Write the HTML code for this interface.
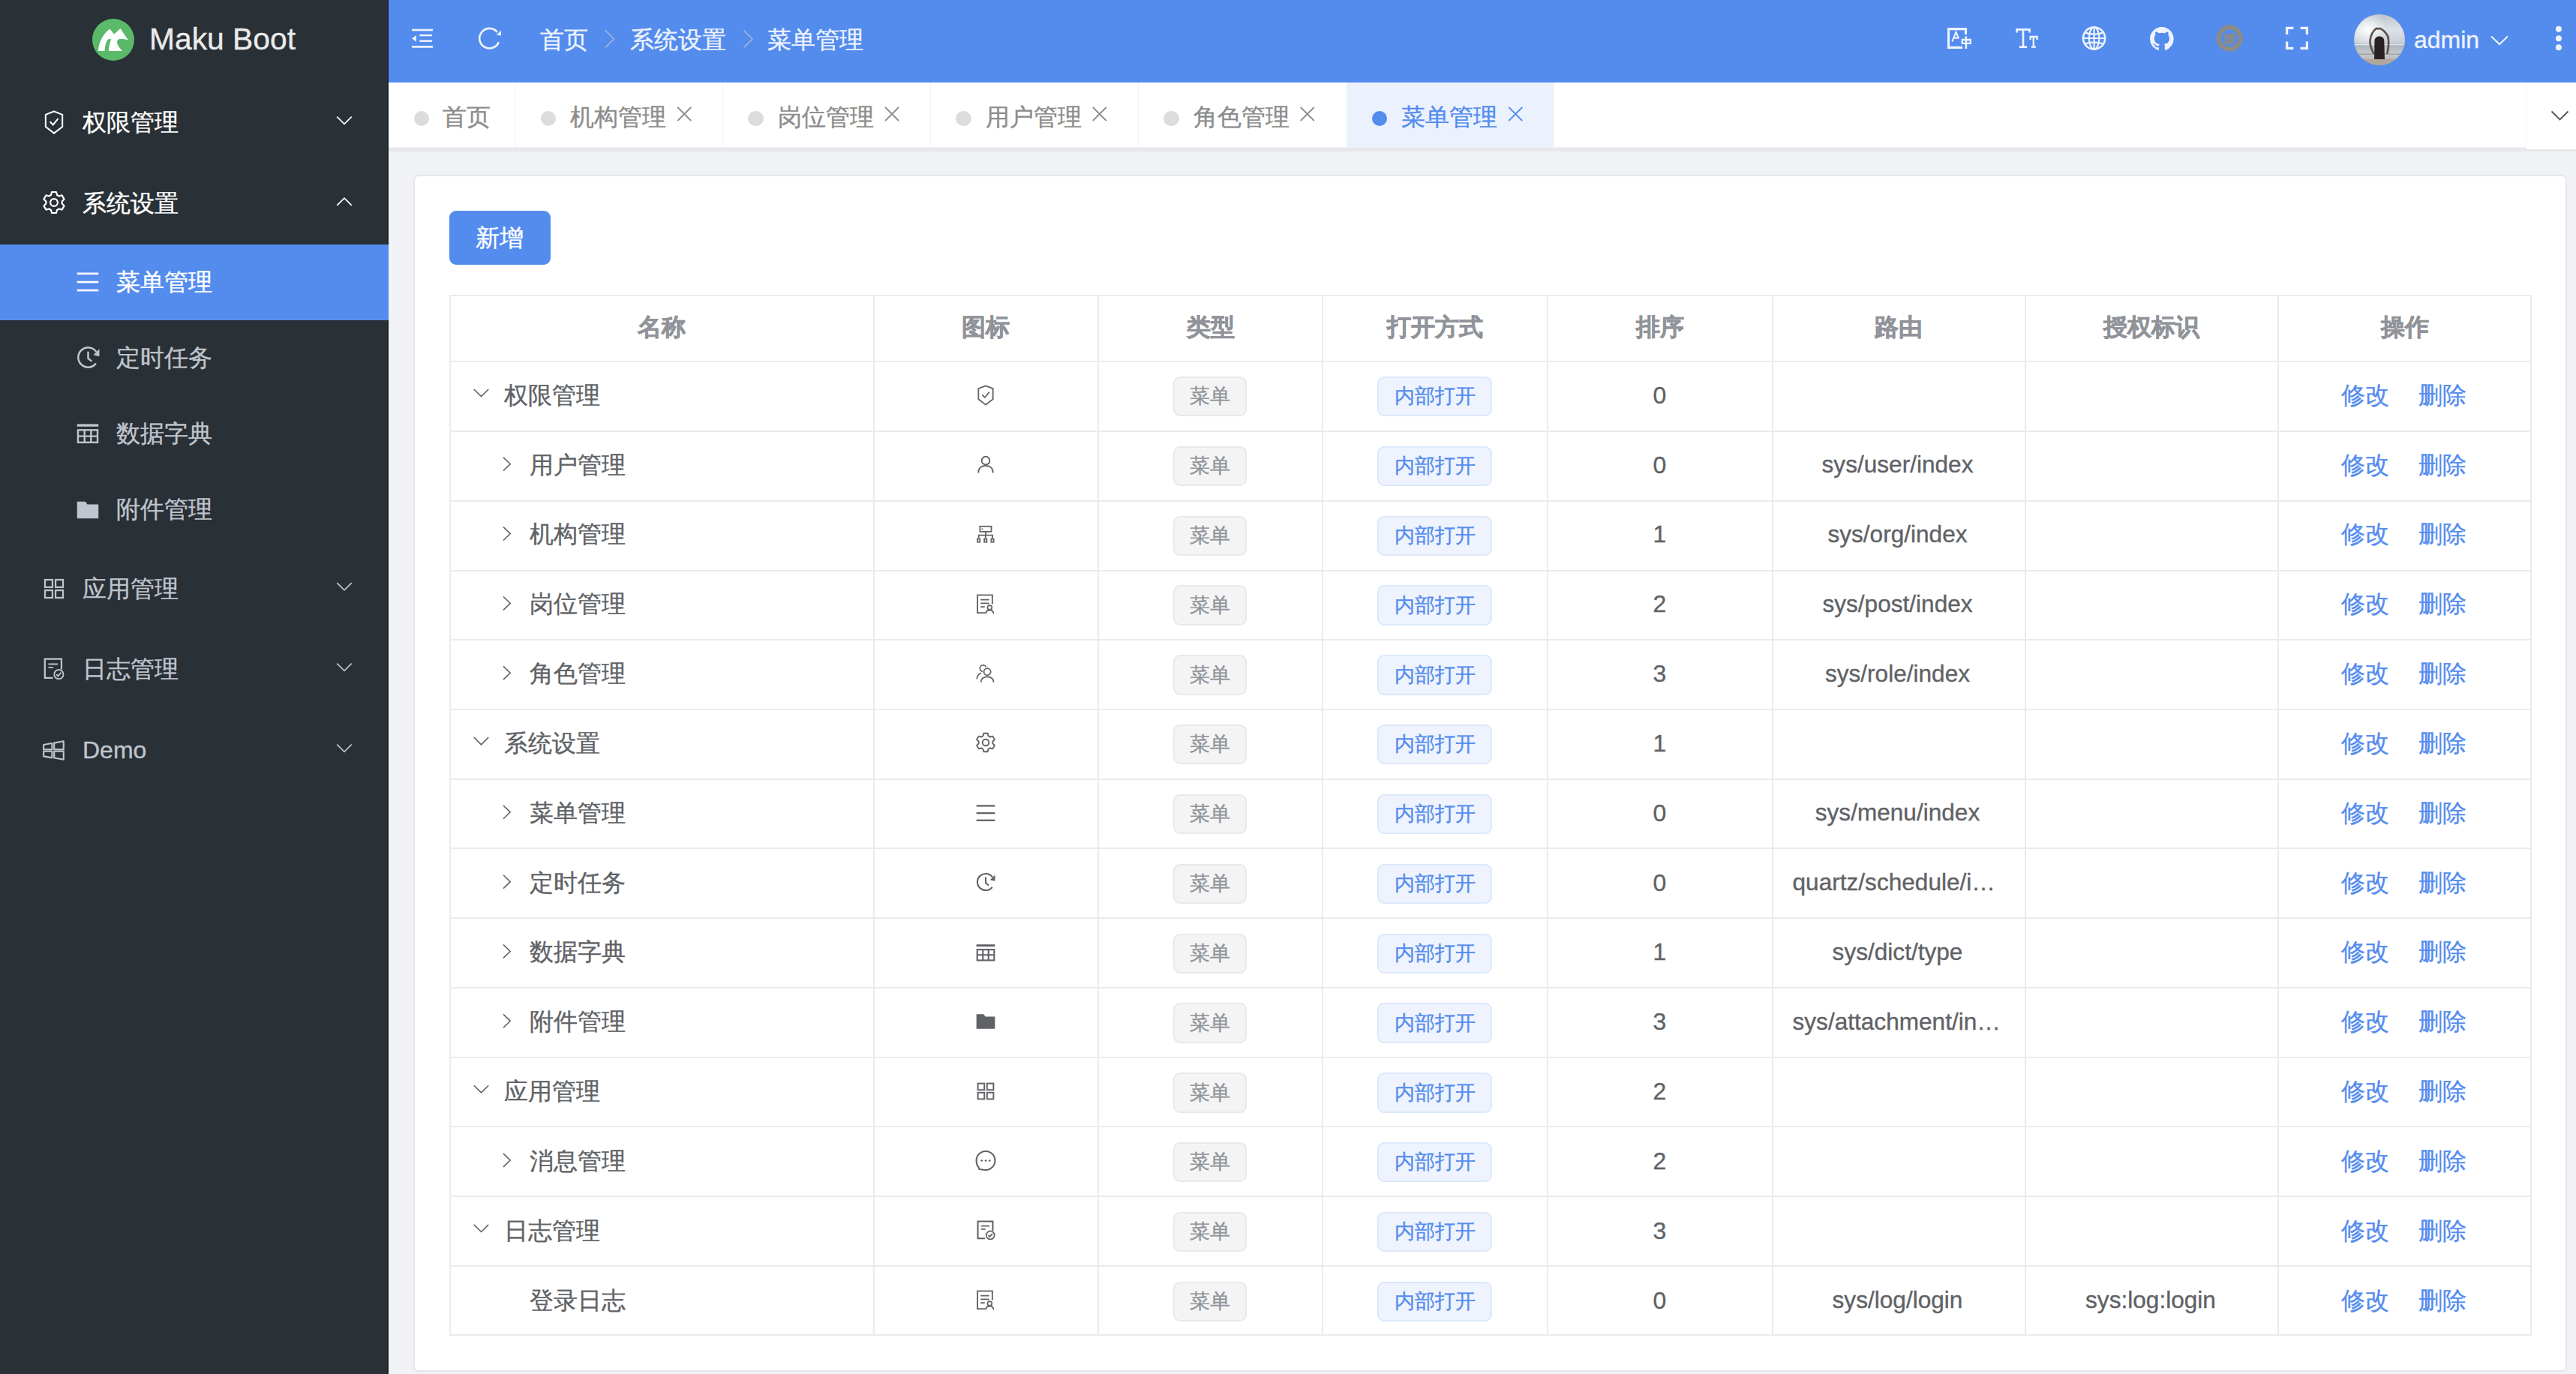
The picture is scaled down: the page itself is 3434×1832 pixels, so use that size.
<!DOCTYPE html><html><head><meta charset="utf-8"><style>
*{box-sizing:border-box;margin:0;padding:0}
html,body{width:3434px;height:1832px;overflow:hidden}
body{position:relative;background:#f0f2f5;font-family:"Liberation Sans",sans-serif;}
.a{position:absolute}
svg{position:absolute;overflow:visible}
.t{position:absolute;white-space:nowrap;-webkit-text-stroke:0.35px currentColor}
</style></head><body>
<div class="a" style="left:0;top:0;width:518px;height:1832px;background:#293036"></div>
<div class="a" style="left:516px;top:0;width:2px;height:1832px;background:rgba(0,0,0,0.22)"></div>
<svg style="left:123px;top:25px" width="56" height="56" viewBox="0 0 56 56">
<circle cx="28" cy="28" r="28" fill="#5bb96a"/>
<path d="M7.9 43 C9 30 15 20 23.3 13.6 L29.1 20.4 L37.5 13.1 L48 28.8 C44 27 38 26 35.4 27.3 C32 29 31.5 34 40.1 43 L21.8 43 C22.5 36 23.5 31 25.4 27.3 L21.2 27.3 C18 31 17 37 16.5 43 Z" fill="#fff"/>
</svg>
<div class="t" style="left:199px;top:12.20px;height:81.6px;line-height:81.6px;font-size:40.8px;color:#ebebeb;font-weight:normal;">Maku Boot</div>
<div class="a" style="left:0;top:326px;width:518px;height:101px;background:#548cee"></div>
<svg style="left:57.00px;top:148.00px" width="30" height="30" viewBox="0 0 32 32" ><path d="M16 0.5 L27.9 5.2 V22.4 L16 31.6 L4.1 22.4 V5.2 Z" fill="none" stroke="#ffffff" stroke-width="2.2" stroke-linejoin="miter"/><path d="M10.3 15.2 L14.6 19.7 L21.9 10.8" fill="none" stroke="#ffffff" stroke-width="2.2"/></svg>
<div class="t" style="left:110px;top:131.00px;height:64px;line-height:64px;font-size:32px;color:#ffffff;font-weight:normal;">权限管理</div>
<svg style="left:0;top:0" width="3434" height="1832"><path d="M449.25 155.62 L459.00 165.38 L468.75 155.62" fill="none" stroke="#ffffff" stroke-width="1.7"/></svg>
<svg style="left:56.00px;top:254.30px" width="32" height="32" viewBox="0 0 32 32" ><path d="M20.05 5.99 L18.97 2.01 L13.03 2.01 L11.95 5.99 L9.35 7.49 L5.37 6.43 L2.40 11.58 L5.31 14.50 L5.31 17.50 L2.40 20.42 L5.37 25.57 L9.35 24.51 L11.95 26.01 L13.03 29.99 L18.97 29.99 L20.05 26.01 L22.65 24.51 L26.63 25.57 L29.60 20.42 L26.69 17.50 L26.69 14.50 L29.60 11.58 L26.63 6.43 L22.65 7.49 Z" fill="none" stroke="#ffffff" stroke-width="2.2" stroke-linejoin="round"/><circle cx="16" cy="16" r="4.9" fill="none" stroke="#ffffff" stroke-width="2.2"/></svg>
<div class="t" style="left:110px;top:239.00px;height:64px;line-height:64px;font-size:32px;color:#ffffff;font-weight:normal;">系统设置</div>
<svg style="left:0;top:0" width="3434" height="1832"><path d="M449.25 273.88 L459.00 264.12 L468.75 273.88" fill="none" stroke="#ffffff" stroke-width="1.7"/></svg>
<svg style="left:57.00px;top:769.50px" width="30" height="30" viewBox="0 0 32 32" ><rect x="3.2" y="3.2" width="10.6" height="10.6" fill="none" stroke="#c0c4cc" stroke-width="2.4"/><rect x="3.2" y="18.2" width="10.6" height="10.6" fill="none" stroke="#c0c4cc" stroke-width="2.4"/><rect x="18.2" y="3.2" width="10.6" height="10.6" fill="none" stroke="#c0c4cc" stroke-width="2.4"/><rect x="18.2" y="18.2" width="10.6" height="10.6" fill="none" stroke="#c0c4cc" stroke-width="2.4"/></svg>
<div class="t" style="left:110px;top:752.50px;height:64px;line-height:64px;font-size:32px;color:#c0c4cc;font-weight:normal;">应用管理</div>
<svg style="left:0;top:0" width="3434" height="1832"><path d="M449.25 777.12 L459.00 786.88 L468.75 777.12" fill="none" stroke="#c0c4cc" stroke-width="1.7"/></svg>
<svg style="left:57.00px;top:877.00px" width="30" height="30" viewBox="0 0 32 32" ><path d="M14.5 28.7 H3 V1.8 H26.6 V16.5" fill="none" stroke="#c0c4cc" stroke-width="2.4"/><path d="M8 9 H21.5 M8 14 H15" stroke="#c0c4cc" stroke-width="2.1"/><circle cx="22.8" cy="23.6" r="6.5" fill="none" stroke="#c0c4cc" stroke-width="2.1"/><path d="M19.5 23.6 L21.7 26.2 L26 21.2" fill="none" stroke="#c0c4cc" stroke-width="2.1"/></svg>
<div class="t" style="left:110px;top:860.00px;height:64px;line-height:64px;font-size:32px;color:#c0c4cc;font-weight:normal;">日志管理</div>
<svg style="left:0;top:0" width="3434" height="1832"><path d="M449.25 884.62 L459.00 894.38 L468.75 884.62" fill="none" stroke="#c0c4cc" stroke-width="1.7"/></svg>
<svg style="left:57.00px;top:985.00px" width="30" height="30" viewBox="0 0 32 32" ><path d="M1.2 8.6 L13.2 6.4 V15.4 H1.2 Z" fill="none" stroke="#c0c4cc" stroke-width="2.3" stroke-linejoin="round"/><path d="M16.2 6 L29.6 3.5 V15.4 H16.2 Z" fill="none" stroke="#c0c4cc" stroke-width="2.3" stroke-linejoin="round"/><path d="M1.2 17.9 H13.2 V27 L1.2 25 Z" fill="none" stroke="#c0c4cc" stroke-width="2.3" stroke-linejoin="round"/><path d="M16.2 17.9 H29.6 V29.6 L16.2 27.2 Z" fill="none" stroke="#c0c4cc" stroke-width="2.3" stroke-linejoin="round"/></svg>
<div class="t" style="left:110px;top:968.00px;height:64px;line-height:64px;font-size:32px;color:#c0c4cc;font-weight:normal;">Demo</div>
<svg style="left:0;top:0" width="3434" height="1832"><path d="M449.25 992.62 L459.00 1002.38 L468.75 992.62" fill="none" stroke="#c0c4cc" stroke-width="1.7"/></svg>
<svg style="left:102.00px;top:361.80px" width="30" height="30" viewBox="0 0 32 32" ><rect x="0.8" y="1.6" width="30.4" height="2.8" fill="#ffffff"/><rect x="0.8" y="13.6" width="30.4" height="2.8" fill="#ffffff"/><rect x="0.8" y="25.4" width="30.4" height="2.8" fill="#ffffff"/></svg>
<div class="t" style="left:155px;top:343.50px;height:64px;line-height:64px;font-size:32px;color:#ffffff;font-weight:normal;">菜单管理</div>
<svg style="left:101.50px;top:461.00px" width="31" height="31" viewBox="0 0 32 32" ><path d="M27.14 8.20 A13.6 13.6 0 1 0 26.72 24.37" fill="none" stroke="#c0c4cc" stroke-width="2.6"/><path d="M31.4 4.4 L31.4 14.6 L23.1 12.6 Z" fill="#c0c4cc"/><path d="M16 8 V17.5 L21 21.5" fill="none" stroke="#c0c4cc" stroke-width="2.6"/></svg>
<div class="t" style="left:155px;top:444.50px;height:64px;line-height:64px;font-size:32px;color:#c0c4cc;font-weight:normal;">定时任务</div>
<svg style="left:102.00px;top:563.80px" width="30" height="30" viewBox="0 0 32 32" ><rect x="0.8" y="1.5" width="30.4" height="3.6" fill="#c0c4cc"/><rect x="2.1" y="10" width="27.8" height="17.6" fill="none" stroke="#c0c4cc" stroke-width="2.6"/><path d="M2.1 18.8 H29.9 M11.4 10 V27.6 M20.6 10 V27.6" stroke="#c0c4cc" stroke-width="2.6"/></svg>
<div class="t" style="left:155px;top:545.50px;height:64px;line-height:64px;font-size:32px;color:#c0c4cc;font-weight:normal;">数据字典</div>
<svg style="left:102.00px;top:664.80px" width="30" height="30" viewBox="0 0 32 32" ><path d="M0.8 4 H12.5 L15.5 8 H31.2 V28 H0.8 Z" fill="#c0c4cc"/></svg>
<div class="t" style="left:155px;top:646.50px;height:64px;line-height:64px;font-size:32px;color:#c0c4cc;font-weight:normal;">附件管理</div>
<div class="a" style="left:518px;top:0;width:2916px;height:109.8px;background:#548cee"></div>
<svg style="left:0;top:0" width="3434" height="120"><rect x="549" y="38.7" width="28" height="2.6" fill="#eef3fd"/><rect x="559.3" y="45.9" width="16.8" height="2.4" fill="#eef3fd"/><rect x="559.3" y="53.4" width="16.8" height="2.5" fill="#eef3fd"/><rect x="549" y="61" width="28" height="2.7" fill="#eef3fd"/><path d="M549 51.3 L554.8 47 V55.7 Z" fill="#eef3fd"/><path d="M662.98 43.01 A13.3 13.3 0 1 0 664.83 56.18" fill="none" stroke="#eef3fd" stroke-width="2.6"/><path d="M668 40.8 V47.6 L661.8 46.6 Z" fill="#eef3fd"/></svg>
<div class="t" style="left:720px;top:20.50px;height:64px;line-height:64px;font-size:32px;color:#eef3fd;font-weight:normal;">首页</div>
<div class="t" style="left:839.5px;top:20.50px;height:64px;line-height:64px;font-size:32px;color:#eef3fd;font-weight:normal;">系统设置</div>
<div class="t" style="left:1023px;top:20.50px;height:64px;line-height:64px;font-size:32px;color:#eef3fd;font-weight:normal;">菜单管理</div>
<svg style="left:0;top:0" width="1200" height="120"><path d="M807 40.5 L818.5 52 L807 63.5" fill="none" stroke="#aab6d6" stroke-width="1.5"/><path d="M991.5 40.5 L1003 52 L991.5 63.5" fill="none" stroke="#aab6d6" stroke-width="1.5"/></svg>
<svg style="left:0;top:0" width="3434" height="120"><path d="M2620.5 46 V38.6 H2597.6 V63.4 H2616.2" fill="none" stroke="#eef3fd" stroke-width="3.1"/><path d="M2602.4 55.6 L2607.5 42.6 L2611.2 51.5 M2604.6 50.6 H2611.4" fill="none" stroke="#eef3fd" stroke-width="2.1"/><path d="M2615.8 53 H2626.8 V57.8 H2615.8 Z" fill="none" stroke="#eef3fd" stroke-width="2.3"/><path d="M2620.9 48.4 V65" fill="none" stroke="#eef3fd" stroke-width="2.5"/><path d="M2688.6 43.6 V39.4 H2705.6 V43.6 M2697 39.4 V62.6 M2692 62.6 H2702" fill="none" stroke="#eef3fd" stroke-width="2.6"/><path d="M2706.6 53 V49 H2715.6 V53 M2710.8 49 V62.6 M2708 62.6 H2714" fill="none" stroke="#eef3fd" stroke-width="2.3"/><circle cx="2791.6" cy="51" r="14.6" fill="none" stroke="#eef3fd" stroke-width="2.6"/><ellipse cx="2791.6" cy="51" rx="6.8" ry="14.6" fill="none" stroke="#eef3fd" stroke-width="2.2"/><path d="M2791.6 36.4 V65.6 M2777 51 H2806.2 M2779 43.4 Q2791.6 47.8 2804.2 43.4 M2779 58.6 Q2791.6 54.2 2804.2 58.6" fill="none" stroke="#eef3fd" stroke-width="2.2"/><path d="M3048.6 46 V37.4 H3057.4 M3066.6 37.4 H3075.4 V46 M3075.4 55.6 V64.4 H3066.6 M3057.4 64.4 H3048.6 V55.6" fill="none" stroke="#eef3fd" stroke-width="3.3"/><circle cx="3410.9" cy="38.8" r="4" fill="#eef3fd"/><circle cx="3410.9" cy="51.2" r="4" fill="#eef3fd"/><circle cx="3410.9" cy="63.3" r="4" fill="#eef3fd"/><path d="M3321 48.5 L3332 59 L3343 48.5" fill="none" stroke="#eef3fd" stroke-width="2"/></svg>
<svg style="left:0;top:0;filter:blur(1.3px)" width="3434" height="120"><circle cx="2972.2" cy="50.9" r="14.6" fill="none" stroke="#938c78" stroke-width="5.4"/><path d="M2981 47.2 H2967.4 V56.6 H2976 V51.2 H2971.2" fill="none" stroke="#938c78" stroke-width="3.6"/></svg>
<svg style="left:2865.9px;top:35.6px" width="31.7" height="31.7" viewBox="0 0 16 16"><path fill="#eef3fd" d="M8 0C3.58 0 0 3.580 0 8c0 3.54 2.29 6.53 5.47 7.59.4.07.55-.17.55-.38 0-.19-.01-.82-.01-1.49-2.01.37-2.53-.49-2.69-.94-.09-.23-.48-.94-.82-1.13-.28-.15-.68-.52-.01-.53.63-.01 1.08.58 1.23.82.72 1.21 1.87.87 2.33.66.07-.52.28-.87.51-1.07-1.78-.2-3.64-.89-3.64-3.95 0-.87.31-1.59.82-2.15-.08-.2-.36-1.02.08-2.12 0 0 .67-.21 2.2.82.64-.18 1.32-.27 2-.27.68 0 1.36.09 2 .27 1.53-1.04 2.2-.82 2.2-.82.44 1.1.16 1.92.08 2.12.51.56.82 1.27.82 2.15 0 3.07-1.87 3.75-3.65 3.95.29.25.54.73.54 1.48 0 1.07-.01 1.93-.01 2.2 0 .21.15.46.55.38A8.013 8.013 0 0016 8c0-4.42-3.58-8-8-8z"/></svg>
<svg style="left:3138px;top:19.1px" width="68" height="68" viewBox="0 0 68 68"><defs><clipPath id="avc"><circle cx="34" cy="34" r="34"/></clipPath><linearGradient id="avg" x1="0" y1="0" x2="0" y2="1"><stop offset="0" stop-color="#bcc3cb"/><stop offset="0.3" stop-color="#dde2e7"/><stop offset="0.55" stop-color="#c9cfd6"/><stop offset="0.62" stop-color="#aeb6bf"/><stop offset="0.78" stop-color="#c6cacf"/><stop offset="1" stop-color="#b3a79c"/></linearGradient><radialGradient id="avh" cx="0.28" cy="0.3" r="0.35"><stop offset="0" stop-color="#fff" stop-opacity="0.9"/><stop offset="1" stop-color="#fff" stop-opacity="0"/></radialGradient><filter id="avb"><feGaussianBlur stdDeviation="0.6"/></filter></defs><g clip-path="url(#avc)" filter="url(#avb)"><rect width="68" height="68" fill="url(#avg)"/><rect width="68" height="68" fill="url(#avh)"/><rect x="0" y="40" width="68" height="1.2" fill="#e9edf1" opacity="0.8"/><rect x="0" y="52.5" width="68" height="1.5" fill="#8f8780" opacity="0.6"/><path d="M26.5 53 C23.5 47 21 40 21.5 34.8 C22.5 28 26 22 29 19.6 C30.5 18.5 32 18.5 33.5 20 M44 53 C46 46 46.5 38 45.8 31.8 C45 27 40 21.5 36 19.6 C34.8 18.6 33.6 19 33.5 20" fill="none" stroke="#5c4f4c" stroke-width="2.6"/><path d="M27.5 35 C27.5 27.5 40.3 27.5 40.3 35 L41 61 C38 64.5 30 64.5 27 61 Z" fill="#2a2422"/><rect x="0" y="60" width="68" height="8" fill="#b3a69b"/></g></svg>
<div class="t" style="left:3218px;top:20.50px;height:64px;line-height:64px;font-size:32px;color:#eef3fd;font-weight:normal;">admin</div>
<div class="a" style="left:518px;top:109.8px;width:2916px;height:86.7px;background:#fff"></div>
<div class="a" style="left:518px;top:196.5px;width:2916px;height:5.3px;background:#e6e8eb"></div>
<div class="a" style="left:686.5px;top:109.8px;width:1px;height:86.7px;background:#f3f3f3"></div>
<div class="a" style="left:551.5px;top:147.5px;width:20.5px;height:20.5px;border-radius:50%;background:#dcdcdc"></div>
<div class="t" style="left:589.5px;top:124.00px;height:64px;line-height:64px;font-size:32px;color:#8c8c8c;font-weight:normal;">首页</div>
<div class="a" style="left:963.25px;top:109.8px;width:1px;height:86.7px;background:#f3f3f3"></div>
<div class="a" style="left:720.5px;top:147.5px;width:20.5px;height:20.5px;border-radius:50%;background:#dcdcdc"></div>
<div class="t" style="left:760px;top:124.00px;height:64px;line-height:64px;font-size:32px;color:#8c8c8c;font-weight:normal;">机构管理</div>
<svg style="left:0;top:0" width="3434" height="200"><path d="M903.30 143 L921.30 161 M921.30 143 L903.30 161" stroke="#8c8c8c" stroke-width="1.8"/></svg>
<div class="a" style="left:1240.0px;top:109.8px;width:1px;height:86.7px;background:#f3f3f3"></div>
<div class="a" style="left:997.25px;top:147.5px;width:20.5px;height:20.5px;border-radius:50%;background:#dcdcdc"></div>
<div class="t" style="left:1036.75px;top:124.00px;height:64px;line-height:64px;font-size:32px;color:#8c8c8c;font-weight:normal;">岗位管理</div>
<svg style="left:0;top:0" width="3434" height="200"><path d="M1180.05 143 L1198.05 161 M1198.05 143 L1180.05 161" stroke="#8c8c8c" stroke-width="1.8"/></svg>
<div class="a" style="left:1517.0px;top:109.8px;width:1px;height:86.7px;background:#f3f3f3"></div>
<div class="a" style="left:1274.0px;top:147.5px;width:20.5px;height:20.5px;border-radius:50%;background:#dcdcdc"></div>
<div class="t" style="left:1313.5px;top:124.00px;height:64px;line-height:64px;font-size:32px;color:#8c8c8c;font-weight:normal;">用户管理</div>
<svg style="left:0;top:0" width="3434" height="200"><path d="M1456.80 143 L1474.80 161 M1474.80 143 L1456.80 161" stroke="#8c8c8c" stroke-width="1.8"/></svg>
<div class="a" style="left:1794.5px;top:109.8px;width:1px;height:86.7px;background:#f3f3f3"></div>
<div class="a" style="left:1551.0px;top:147.5px;width:20.5px;height:20.5px;border-radius:50%;background:#dcdcdc"></div>
<div class="t" style="left:1590.5px;top:124.00px;height:64px;line-height:64px;font-size:32px;color:#8c8c8c;font-weight:normal;">角色管理</div>
<svg style="left:0;top:0" width="3434" height="200"><path d="M1733.80 143 L1751.80 161 M1751.80 143 L1733.80 161" stroke="#8c8c8c" stroke-width="1.8"/></svg>
<div class="a" style="left:1795px;top:109.8px;width:276.5px;height:86.7px;background:#ecf2fd"></div>
<div class="a" style="left:2071.0px;top:109.8px;width:1px;height:86.7px;background:#f3f3f3"></div>
<div class="a" style="left:1828.5px;top:147.5px;width:20.5px;height:20.5px;border-radius:50%;background:#548cee"></div>
<div class="t" style="left:1868px;top:124.00px;height:64px;line-height:64px;font-size:32px;color:#548cee;font-weight:normal;">菜单管理</div>
<svg style="left:0;top:0" width="3434" height="200"><path d="M2011.30 143 L2029.30 161 M2029.30 143 L2011.30 161" stroke="#548cee" stroke-width="1.8"/></svg>
<div class="a" style="left:3367px;top:109.8px;width:1px;height:86.7px;background:#f3f3f3"></div>
<div class="a" style="left:3368px;top:109.8px;width:66px;height:89.5px;background:#fff"></div>
<svg style="left:0;top:0" width="3434" height="200"><path d="M3401.5 148.5 L3412.5 159.5 L3423.5 148.5" fill="none" stroke="#555" stroke-width="1.9"/></svg>
<div class="a" style="left:551px;top:233px;width:2870.7px;height:1595.7px;background:#fff;border:2px solid #e5e7ea;border-radius:7px"></div>
<div class="a" style="left:599px;top:281px;width:135px;height:71.5px;background:#548cee;border-radius:9px"></div>
<div class="t" style="left:633.5px;top:284.50px;height:64px;line-height:64px;font-size:32px;color:#fff;font-weight:normal;">新增</div>
<div class="a" style="left:599px;top:393.00px;width:2776px;height:2px;background:#ebebeb"></div>
<div class="a" style="left:599px;top:481.00px;width:2776px;height:2px;background:#ebebeb"></div>
<div class="a" style="left:599px;top:574.20px;width:2776px;height:2px;background:#ebebeb"></div>
<div class="a" style="left:599px;top:666.90px;width:2776px;height:2px;background:#ebebeb"></div>
<div class="a" style="left:599px;top:759.60px;width:2776px;height:2px;background:#ebebeb"></div>
<div class="a" style="left:599px;top:852.30px;width:2776px;height:2px;background:#ebebeb"></div>
<div class="a" style="left:599px;top:945.00px;width:2776px;height:2px;background:#ebebeb"></div>
<div class="a" style="left:599px;top:1037.70px;width:2776px;height:2px;background:#ebebeb"></div>
<div class="a" style="left:599px;top:1130.40px;width:2776px;height:2px;background:#ebebeb"></div>
<div class="a" style="left:599px;top:1223.10px;width:2776px;height:2px;background:#ebebeb"></div>
<div class="a" style="left:599px;top:1315.80px;width:2776px;height:2px;background:#ebebeb"></div>
<div class="a" style="left:599px;top:1408.50px;width:2776px;height:2px;background:#ebebeb"></div>
<div class="a" style="left:599px;top:1501.20px;width:2776px;height:2px;background:#ebebeb"></div>
<div class="a" style="left:599px;top:1593.90px;width:2776px;height:2px;background:#ebebeb"></div>
<div class="a" style="left:599px;top:1686.60px;width:2776px;height:2px;background:#ebebeb"></div>
<div class="a" style="left:599px;top:1779.30px;width:2776px;height:2px;background:#ebebeb"></div>
<div class="a" style="left:599px;top:393px;width:2px;height:1388.30px;background:#ebebeb"></div>
<div class="a" style="left:1163.5px;top:393px;width:2px;height:1388.30px;background:#ebebeb"></div>
<div class="a" style="left:1463px;top:393px;width:2px;height:1388.30px;background:#ebebeb"></div>
<div class="a" style="left:1762px;top:393px;width:2px;height:1388.30px;background:#ebebeb"></div>
<div class="a" style="left:2061.5px;top:393px;width:2px;height:1388.30px;background:#ebebeb"></div>
<div class="a" style="left:2361.5px;top:393px;width:2px;height:1388.30px;background:#ebebeb"></div>
<div class="a" style="left:2698.5px;top:393px;width:2px;height:1388.30px;background:#ebebeb"></div>
<div class="a" style="left:3036px;top:393px;width:2px;height:1388.30px;background:#ebebeb"></div>
<div class="a" style="left:3373px;top:393px;width:2px;height:1388.30px;background:#ebebeb"></div>
<div class="t" style="left:582.25px;width:600px;text-align:center;top:404.00px;height:64px;line-height:64px;font-size:32px;color:#909399;font-weight:bold;-webkit-text-stroke:0.6px #909399">名称</div>
<div class="t" style="left:1014.25px;width:600px;text-align:center;top:404.00px;height:64px;line-height:64px;font-size:32px;color:#909399;font-weight:bold;-webkit-text-stroke:0.6px #909399">图标</div>
<div class="t" style="left:1313.50px;width:600px;text-align:center;top:404.00px;height:64px;line-height:64px;font-size:32px;color:#909399;font-weight:bold;-webkit-text-stroke:0.6px #909399">类型</div>
<div class="t" style="left:1612.75px;width:600px;text-align:center;top:404.00px;height:64px;line-height:64px;font-size:32px;color:#909399;font-weight:bold;-webkit-text-stroke:0.6px #909399">打开方式</div>
<div class="t" style="left:1912.50px;width:600px;text-align:center;top:404.00px;height:64px;line-height:64px;font-size:32px;color:#909399;font-weight:bold;-webkit-text-stroke:0.6px #909399">排序</div>
<div class="t" style="left:2231.00px;width:600px;text-align:center;top:404.00px;height:64px;line-height:64px;font-size:32px;color:#909399;font-weight:bold;-webkit-text-stroke:0.6px #909399">路由</div>
<div class="t" style="left:2568.25px;width:600px;text-align:center;top:404.00px;height:64px;line-height:64px;font-size:32px;color:#909399;font-weight:bold;-webkit-text-stroke:0.6px #909399">授权标识</div>
<div class="t" style="left:2905.50px;width:600px;text-align:center;top:404.00px;height:64px;line-height:64px;font-size:32px;color:#909399;font-weight:bold;-webkit-text-stroke:0.6px #909399">操作</div>
<div class="t" style="left:672px;top:494.85px;height:64px;line-height:64px;font-size:32px;color:#606266;font-weight:normal;">权限管理</div>
<svg style="left:1301.20px;top:514.35px" width="26" height="26" viewBox="0 0 32 32" ><path d="M16 0.5 L27.9 5.2 V22.4 L16 31.6 L4.1 22.4 V5.2 Z" fill="none" stroke="#606266" stroke-width="2.2" stroke-linejoin="miter"/><path d="M10.3 15.2 L14.6 19.7 L21.9 10.8" fill="none" stroke="#606266" stroke-width="2.2"/></svg>
<div class="a" style="left:1564.3px;top:501.95px;width:98.2px;height:53.4px;background:#f4f4f5;border:2px solid #e9e9eb;border-radius:9px"></div>
<div class="t" style="left:1313.40px;width:600px;text-align:center;top:501.35px;height:54px;line-height:54px;font-size:27px;color:#909399;font-weight:normal">菜单</div>
<div class="a" style="left:1836.3px;top:501.95px;width:152.5px;height:53.4px;background:#eef3fd;border:2px solid #dce8fb;border-radius:9px"></div>
<div class="t" style="left:1612.50px;width:600px;text-align:center;top:501.35px;height:54px;line-height:54px;font-size:27px;color:#548cee;font-weight:normal">内部打开</div>
<div class="t" style="left:1912.50px;width:600px;text-align:center;top:494.85px;height:64px;line-height:64px;font-size:32px;color:#606266;font-weight:normal">0</div>
<div class="t" style="left:3121px;top:494.85px;height:64px;line-height:64px;font-size:32px;color:#548cee;font-weight:normal;">修改</div>
<div class="t" style="left:3224px;top:494.85px;height:64px;line-height:64px;font-size:32px;color:#548cee;font-weight:normal;">删除</div>
<div class="t" style="left:706px;top:587.67px;height:64px;line-height:64px;font-size:32px;color:#606266;font-weight:normal;">用户管理</div>
<svg style="left:1301.20px;top:606.17px" width="26" height="26" viewBox="0 0 32 32" ><circle cx="16" cy="10" r="6.6" fill="none" stroke="#606266" stroke-width="2.3"/><path d="M4 30 C4 22 9.5 18.5 16 18.5 C22.5 18.5 28 22 28 30" fill="none" stroke="#606266" stroke-width="2.3"/></svg>
<div class="a" style="left:1564.3px;top:594.77px;width:98.2px;height:53.4px;background:#f4f4f5;border:2px solid #e9e9eb;border-radius:9px"></div>
<div class="t" style="left:1313.40px;width:600px;text-align:center;top:594.17px;height:54px;line-height:54px;font-size:27px;color:#909399;font-weight:normal">菜单</div>
<div class="a" style="left:1836.3px;top:594.77px;width:152.5px;height:53.4px;background:#eef3fd;border:2px solid #dce8fb;border-radius:9px"></div>
<div class="t" style="left:1612.50px;width:600px;text-align:center;top:594.17px;height:54px;line-height:54px;font-size:27px;color:#548cee;font-weight:normal">内部打开</div>
<div class="t" style="left:1912.50px;width:600px;text-align:center;top:587.67px;height:64px;line-height:64px;font-size:32px;color:#606266;font-weight:normal">0</div>
<div class="t" style="left:2229.50px;width:600px;text-align:center;top:588.07px;height:63.2px;line-height:63.2px;font-size:31.6px;color:#606266;font-weight:normal">sys/user/index</div>
<div class="t" style="left:3121px;top:587.67px;height:64px;line-height:64px;font-size:32px;color:#548cee;font-weight:normal;">修改</div>
<div class="t" style="left:3224px;top:587.67px;height:64px;line-height:64px;font-size:32px;color:#548cee;font-weight:normal;">删除</div>
<div class="t" style="left:706px;top:680.49px;height:64px;line-height:64px;font-size:32px;color:#606266;font-weight:normal;">机构管理</div>
<svg style="left:1301.20px;top:698.99px" width="26" height="26" viewBox="0 0 32 32" ><rect x="6.6" y="3.5" width="18.7" height="8.7" fill="none" stroke="#606266" stroke-width="2.2"/><rect x="9.4" y="6.8" width="2.2" height="2.2" fill="#606266"/><path d="M16 12.2 V18.1 M4.5 23 V18.1 H27.1 V23 M15.7 18.1 V23" fill="none" stroke="#606266" stroke-width="2.2"/><rect x="2.5" y="24" width="4" height="5.2" fill="none" stroke="#606266" stroke-width="2.2"/><rect x="13.7" y="24" width="4" height="5.2" fill="none" stroke="#606266" stroke-width="2.2"/><rect x="25.1" y="24" width="4" height="5.2" fill="none" stroke="#606266" stroke-width="2.2"/></svg>
<div class="a" style="left:1564.3px;top:687.59px;width:98.2px;height:53.4px;background:#f4f4f5;border:2px solid #e9e9eb;border-radius:9px"></div>
<div class="t" style="left:1313.40px;width:600px;text-align:center;top:686.99px;height:54px;line-height:54px;font-size:27px;color:#909399;font-weight:normal">菜单</div>
<div class="a" style="left:1836.3px;top:687.59px;width:152.5px;height:53.4px;background:#eef3fd;border:2px solid #dce8fb;border-radius:9px"></div>
<div class="t" style="left:1612.50px;width:600px;text-align:center;top:686.99px;height:54px;line-height:54px;font-size:27px;color:#548cee;font-weight:normal">内部打开</div>
<div class="t" style="left:1912.50px;width:600px;text-align:center;top:680.49px;height:64px;line-height:64px;font-size:32px;color:#606266;font-weight:normal">1</div>
<div class="t" style="left:2229.50px;width:600px;text-align:center;top:680.89px;height:63.2px;line-height:63.2px;font-size:31.6px;color:#606266;font-weight:normal">sys/org/index</div>
<div class="t" style="left:3121px;top:680.49px;height:64px;line-height:64px;font-size:32px;color:#548cee;font-weight:normal;">修改</div>
<div class="t" style="left:3224px;top:680.49px;height:64px;line-height:64px;font-size:32px;color:#548cee;font-weight:normal;">删除</div>
<div class="t" style="left:706px;top:773.31px;height:64px;line-height:64px;font-size:32px;color:#606266;font-weight:normal;">岗位管理</div>
<svg style="left:1301.20px;top:791.81px" width="26" height="26" viewBox="0 0 32 32" ><path d="M15.5 30.9 H2.5 V1.75 H26.9 V16.6" fill="none" stroke="#606266" stroke-width="2.3"/><path d="M7.6 9.3 H21.8 M7.6 15.3 H21.8 M7.6 21 H14.5" stroke="#606266" stroke-width="2.1"/><circle cx="22.6" cy="22.2" r="3.6" fill="none" stroke="#606266" stroke-width="2.1"/><path d="M16.4 32.2 C16.4 28.5 19 26.6 22.6 26.6 C26.2 26.6 28.8 28.5 28.8 32.2" fill="none" stroke="#606266" stroke-width="2.1"/></svg>
<div class="a" style="left:1564.3px;top:780.41px;width:98.2px;height:53.4px;background:#f4f4f5;border:2px solid #e9e9eb;border-radius:9px"></div>
<div class="t" style="left:1313.40px;width:600px;text-align:center;top:779.81px;height:54px;line-height:54px;font-size:27px;color:#909399;font-weight:normal">菜单</div>
<div class="a" style="left:1836.3px;top:780.41px;width:152.5px;height:53.4px;background:#eef3fd;border:2px solid #dce8fb;border-radius:9px"></div>
<div class="t" style="left:1612.50px;width:600px;text-align:center;top:779.81px;height:54px;line-height:54px;font-size:27px;color:#548cee;font-weight:normal">内部打开</div>
<div class="t" style="left:1912.50px;width:600px;text-align:center;top:773.31px;height:64px;line-height:64px;font-size:32px;color:#606266;font-weight:normal">2</div>
<div class="t" style="left:2229.50px;width:600px;text-align:center;top:773.71px;height:63.2px;line-height:63.2px;font-size:31.6px;color:#606266;font-weight:normal">sys/post/index</div>
<div class="t" style="left:3121px;top:773.31px;height:64px;line-height:64px;font-size:32px;color:#548cee;font-weight:normal;">修改</div>
<div class="t" style="left:3224px;top:773.31px;height:64px;line-height:64px;font-size:32px;color:#548cee;font-weight:normal;">删除</div>
<div class="t" style="left:706px;top:866.13px;height:64px;line-height:64px;font-size:32px;color:#606266;font-weight:normal;">角色管理</div>
<svg style="left:1301.20px;top:884.63px" width="26" height="26" viewBox="0 0 32 32" ><circle cx="11.8" cy="7.6" r="5.2" fill="none" stroke="#606266" stroke-width="2.2"/><path d="M1.5 25 C2 19.5 4.8 16.6 8.6 15.4" fill="none" stroke="#606266" stroke-width="2.2"/><circle cx="18.6" cy="13.2" r="5.6" fill="#fff" stroke="#fff" stroke-width="4.5"/><circle cx="18.6" cy="13.2" r="5.6" fill="none" stroke="#606266" stroke-width="2.2"/><path d="M8.2 30.5 C8.2 24.5 12.6 21.4 18.6 21.4 C24.6 21.4 29 24.5 29 30.5" fill="none" stroke="#606266" stroke-width="2.2"/></svg>
<div class="a" style="left:1564.3px;top:873.23px;width:98.2px;height:53.4px;background:#f4f4f5;border:2px solid #e9e9eb;border-radius:9px"></div>
<div class="t" style="left:1313.40px;width:600px;text-align:center;top:872.63px;height:54px;line-height:54px;font-size:27px;color:#909399;font-weight:normal">菜单</div>
<div class="a" style="left:1836.3px;top:873.23px;width:152.5px;height:53.4px;background:#eef3fd;border:2px solid #dce8fb;border-radius:9px"></div>
<div class="t" style="left:1612.50px;width:600px;text-align:center;top:872.63px;height:54px;line-height:54px;font-size:27px;color:#548cee;font-weight:normal">内部打开</div>
<div class="t" style="left:1912.50px;width:600px;text-align:center;top:866.13px;height:64px;line-height:64px;font-size:32px;color:#606266;font-weight:normal">3</div>
<div class="t" style="left:2229.50px;width:600px;text-align:center;top:866.53px;height:63.2px;line-height:63.2px;font-size:31.6px;color:#606266;font-weight:normal">sys/role/index</div>
<div class="t" style="left:3121px;top:866.13px;height:64px;line-height:64px;font-size:32px;color:#548cee;font-weight:normal;">修改</div>
<div class="t" style="left:3224px;top:866.13px;height:64px;line-height:64px;font-size:32px;color:#548cee;font-weight:normal;">删除</div>
<div class="t" style="left:672px;top:958.95px;height:64px;line-height:64px;font-size:32px;color:#606266;font-weight:normal;">系统设置</div>
<svg style="left:1300.20px;top:976.45px" width="28" height="28" viewBox="0 0 32 32" ><path d="M20.05 5.99 L18.97 2.01 L13.03 2.01 L11.95 5.99 L9.35 7.49 L5.37 6.43 L2.40 11.58 L5.31 14.50 L5.31 17.50 L2.40 20.42 L5.37 25.57 L9.35 24.51 L11.95 26.01 L13.03 29.99 L18.97 29.99 L20.05 26.01 L22.65 24.51 L26.63 25.57 L29.60 20.42 L26.69 17.50 L26.69 14.50 L29.60 11.58 L26.63 6.43 L22.65 7.49 Z" fill="none" stroke="#606266" stroke-width="2.2" stroke-linejoin="round"/><circle cx="16" cy="16" r="4.9" fill="none" stroke="#606266" stroke-width="2.2"/></svg>
<div class="a" style="left:1564.3px;top:966.05px;width:98.2px;height:53.4px;background:#f4f4f5;border:2px solid #e9e9eb;border-radius:9px"></div>
<div class="t" style="left:1313.40px;width:600px;text-align:center;top:965.45px;height:54px;line-height:54px;font-size:27px;color:#909399;font-weight:normal">菜单</div>
<div class="a" style="left:1836.3px;top:966.05px;width:152.5px;height:53.4px;background:#eef3fd;border:2px solid #dce8fb;border-radius:9px"></div>
<div class="t" style="left:1612.50px;width:600px;text-align:center;top:965.45px;height:54px;line-height:54px;font-size:27px;color:#548cee;font-weight:normal">内部打开</div>
<div class="t" style="left:1912.50px;width:600px;text-align:center;top:958.95px;height:64px;line-height:64px;font-size:32px;color:#606266;font-weight:normal">1</div>
<div class="t" style="left:3121px;top:958.95px;height:64px;line-height:64px;font-size:32px;color:#548cee;font-weight:normal;">修改</div>
<div class="t" style="left:3224px;top:958.95px;height:64px;line-height:64px;font-size:32px;color:#548cee;font-weight:normal;">删除</div>
<div class="t" style="left:706px;top:1051.77px;height:64px;line-height:64px;font-size:32px;color:#606266;font-weight:normal;">菜单管理</div>
<svg style="left:1301.20px;top:1072.27px" width="26" height="26" viewBox="0 0 32 32" ><rect x="0.8" y="1.6" width="30.4" height="2.8" fill="#606266"/><rect x="0.8" y="13.6" width="30.4" height="2.8" fill="#606266"/><rect x="0.8" y="25.4" width="30.4" height="2.8" fill="#606266"/></svg>
<div class="a" style="left:1564.3px;top:1058.87px;width:98.2px;height:53.4px;background:#f4f4f5;border:2px solid #e9e9eb;border-radius:9px"></div>
<div class="t" style="left:1313.40px;width:600px;text-align:center;top:1058.27px;height:54px;line-height:54px;font-size:27px;color:#909399;font-weight:normal">菜单</div>
<div class="a" style="left:1836.3px;top:1058.87px;width:152.5px;height:53.4px;background:#eef3fd;border:2px solid #dce8fb;border-radius:9px"></div>
<div class="t" style="left:1612.50px;width:600px;text-align:center;top:1058.27px;height:54px;line-height:54px;font-size:27px;color:#548cee;font-weight:normal">内部打开</div>
<div class="t" style="left:1912.50px;width:600px;text-align:center;top:1051.77px;height:64px;line-height:64px;font-size:32px;color:#606266;font-weight:normal">0</div>
<div class="t" style="left:2229.50px;width:600px;text-align:center;top:1052.17px;height:63.2px;line-height:63.2px;font-size:31.6px;color:#606266;font-weight:normal">sys/menu/index</div>
<div class="t" style="left:3121px;top:1051.77px;height:64px;line-height:64px;font-size:32px;color:#548cee;font-weight:normal;">修改</div>
<div class="t" style="left:3224px;top:1051.77px;height:64px;line-height:64px;font-size:32px;color:#548cee;font-weight:normal;">删除</div>
<div class="t" style="left:706px;top:1144.59px;height:64px;line-height:64px;font-size:32px;color:#606266;font-weight:normal;">定时任务</div>
<svg style="left:1301.20px;top:1163.09px" width="26" height="26" viewBox="0 0 32 32" ><path d="M27.14 8.20 A13.6 13.6 0 1 0 26.72 24.37" fill="none" stroke="#606266" stroke-width="2.6"/><path d="M31.4 4.4 L31.4 14.6 L23.1 12.6 Z" fill="#606266"/><path d="M16 8 V17.5 L21 21.5" fill="none" stroke="#606266" stroke-width="2.6"/></svg>
<div class="a" style="left:1564.3px;top:1151.69px;width:98.2px;height:53.4px;background:#f4f4f5;border:2px solid #e9e9eb;border-radius:9px"></div>
<div class="t" style="left:1313.40px;width:600px;text-align:center;top:1151.09px;height:54px;line-height:54px;font-size:27px;color:#909399;font-weight:normal">菜单</div>
<div class="a" style="left:1836.3px;top:1151.69px;width:152.5px;height:53.4px;background:#eef3fd;border:2px solid #dce8fb;border-radius:9px"></div>
<div class="t" style="left:1612.50px;width:600px;text-align:center;top:1151.09px;height:54px;line-height:54px;font-size:27px;color:#548cee;font-weight:normal">内部打开</div>
<div class="t" style="left:1912.50px;width:600px;text-align:center;top:1144.59px;height:64px;line-height:64px;font-size:32px;color:#606266;font-weight:normal">0</div>
<div class="t" style="left:2389.5px;top:1144.99px;height:63.2px;line-height:63.2px;font-size:31.6px;color:#606266;font-weight:normal;">quartz/schedule/i…</div>
<div class="t" style="left:3121px;top:1144.59px;height:64px;line-height:64px;font-size:32px;color:#548cee;font-weight:normal;">修改</div>
<div class="t" style="left:3224px;top:1144.59px;height:64px;line-height:64px;font-size:32px;color:#548cee;font-weight:normal;">删除</div>
<div class="t" style="left:706px;top:1237.41px;height:64px;line-height:64px;font-size:32px;color:#606266;font-weight:normal;">数据字典</div>
<svg style="left:1301.20px;top:1257.61px" width="26" height="26" viewBox="0 0 32 32" ><rect x="0.8" y="1.5" width="30.4" height="3.6" fill="#606266"/><rect x="2.1" y="10" width="27.8" height="17.6" fill="none" stroke="#606266" stroke-width="2.6"/><path d="M2.1 18.8 H29.9 M11.4 10 V27.6 M20.6 10 V27.6" stroke="#606266" stroke-width="2.6"/></svg>
<div class="a" style="left:1564.3px;top:1244.51px;width:98.2px;height:53.4px;background:#f4f4f5;border:2px solid #e9e9eb;border-radius:9px"></div>
<div class="t" style="left:1313.40px;width:600px;text-align:center;top:1243.91px;height:54px;line-height:54px;font-size:27px;color:#909399;font-weight:normal">菜单</div>
<div class="a" style="left:1836.3px;top:1244.51px;width:152.5px;height:53.4px;background:#eef3fd;border:2px solid #dce8fb;border-radius:9px"></div>
<div class="t" style="left:1612.50px;width:600px;text-align:center;top:1243.91px;height:54px;line-height:54px;font-size:27px;color:#548cee;font-weight:normal">内部打开</div>
<div class="t" style="left:1912.50px;width:600px;text-align:center;top:1237.41px;height:64px;line-height:64px;font-size:32px;color:#606266;font-weight:normal">1</div>
<div class="t" style="left:2229.50px;width:600px;text-align:center;top:1237.81px;height:63.2px;line-height:63.2px;font-size:31.6px;color:#606266;font-weight:normal">sys/dict/type</div>
<div class="t" style="left:3121px;top:1237.41px;height:64px;line-height:64px;font-size:32px;color:#548cee;font-weight:normal;">修改</div>
<div class="t" style="left:3224px;top:1237.41px;height:64px;line-height:64px;font-size:32px;color:#548cee;font-weight:normal;">删除</div>
<div class="t" style="left:706px;top:1330.23px;height:64px;line-height:64px;font-size:32px;color:#606266;font-weight:normal;">附件管理</div>
<svg style="left:1301.20px;top:1348.73px" width="26" height="26" viewBox="0 0 32 32" ><path d="M0.8 4 H12.5 L15.5 8 H31.2 V28 H0.8 Z" fill="#606266"/></svg>
<div class="a" style="left:1564.3px;top:1337.33px;width:98.2px;height:53.4px;background:#f4f4f5;border:2px solid #e9e9eb;border-radius:9px"></div>
<div class="t" style="left:1313.40px;width:600px;text-align:center;top:1336.73px;height:54px;line-height:54px;font-size:27px;color:#909399;font-weight:normal">菜单</div>
<div class="a" style="left:1836.3px;top:1337.33px;width:152.5px;height:53.4px;background:#eef3fd;border:2px solid #dce8fb;border-radius:9px"></div>
<div class="t" style="left:1612.50px;width:600px;text-align:center;top:1336.73px;height:54px;line-height:54px;font-size:27px;color:#548cee;font-weight:normal">内部打开</div>
<div class="t" style="left:1912.50px;width:600px;text-align:center;top:1330.23px;height:64px;line-height:64px;font-size:32px;color:#606266;font-weight:normal">3</div>
<div class="t" style="left:2389.5px;top:1330.63px;height:63.2px;line-height:63.2px;font-size:31.6px;color:#606266;font-weight:normal;">sys/attachment/in…</div>
<div class="t" style="left:3121px;top:1330.23px;height:64px;line-height:64px;font-size:32px;color:#548cee;font-weight:normal;">修改</div>
<div class="t" style="left:3224px;top:1330.23px;height:64px;line-height:64px;font-size:32px;color:#548cee;font-weight:normal;">删除</div>
<div class="t" style="left:672px;top:1423.05px;height:64px;line-height:64px;font-size:32px;color:#606266;font-weight:normal;">应用管理</div>
<svg style="left:1301.20px;top:1441.55px" width="26" height="26" viewBox="0 0 32 32" ><rect x="3.2" y="3.2" width="10.6" height="10.6" fill="none" stroke="#606266" stroke-width="2.4"/><rect x="3.2" y="18.2" width="10.6" height="10.6" fill="none" stroke="#606266" stroke-width="2.4"/><rect x="18.2" y="3.2" width="10.6" height="10.6" fill="none" stroke="#606266" stroke-width="2.4"/><rect x="18.2" y="18.2" width="10.6" height="10.6" fill="none" stroke="#606266" stroke-width="2.4"/></svg>
<div class="a" style="left:1564.3px;top:1430.15px;width:98.2px;height:53.4px;background:#f4f4f5;border:2px solid #e9e9eb;border-radius:9px"></div>
<div class="t" style="left:1313.40px;width:600px;text-align:center;top:1429.55px;height:54px;line-height:54px;font-size:27px;color:#909399;font-weight:normal">菜单</div>
<div class="a" style="left:1836.3px;top:1430.15px;width:152.5px;height:53.4px;background:#eef3fd;border:2px solid #dce8fb;border-radius:9px"></div>
<div class="t" style="left:1612.50px;width:600px;text-align:center;top:1429.55px;height:54px;line-height:54px;font-size:27px;color:#548cee;font-weight:normal">内部打开</div>
<div class="t" style="left:1912.50px;width:600px;text-align:center;top:1423.05px;height:64px;line-height:64px;font-size:32px;color:#606266;font-weight:normal">2</div>
<div class="t" style="left:3121px;top:1423.05px;height:64px;line-height:64px;font-size:32px;color:#548cee;font-weight:normal;">修改</div>
<div class="t" style="left:3224px;top:1423.05px;height:64px;line-height:64px;font-size:32px;color:#548cee;font-weight:normal;">删除</div>
<div class="t" style="left:706px;top:1515.87px;height:64px;line-height:64px;font-size:32px;color:#606266;font-weight:normal;">消息管理</div>
<svg style="left:1300.20px;top:1533.37px" width="28" height="28" viewBox="0 0 32 32" ><path d="M5.2 26.8 C2.8 24 1.8 20.5 1.8 16.5 C1.8 8.5 8.2 2.2 16 2.2 C23.8 2.2 30.2 8.5 30.2 16.5 C30.2 24.5 23.8 30.8 16 30.8 C12.5 30.8 9 30 5.8 29.5 Z" fill="none" stroke="#606266" stroke-width="2.3" stroke-linejoin="round"/><circle cx="10" cy="16.5" r="1.5" fill="#606266"/><circle cx="16" cy="16.5" r="1.5" fill="#606266"/><circle cx="22" cy="16.5" r="1.5" fill="#606266"/></svg>
<div class="a" style="left:1564.3px;top:1522.97px;width:98.2px;height:53.4px;background:#f4f4f5;border:2px solid #e9e9eb;border-radius:9px"></div>
<div class="t" style="left:1313.40px;width:600px;text-align:center;top:1522.37px;height:54px;line-height:54px;font-size:27px;color:#909399;font-weight:normal">菜单</div>
<div class="a" style="left:1836.3px;top:1522.97px;width:152.5px;height:53.4px;background:#eef3fd;border:2px solid #dce8fb;border-radius:9px"></div>
<div class="t" style="left:1612.50px;width:600px;text-align:center;top:1522.37px;height:54px;line-height:54px;font-size:27px;color:#548cee;font-weight:normal">内部打开</div>
<div class="t" style="left:1912.50px;width:600px;text-align:center;top:1515.87px;height:64px;line-height:64px;font-size:32px;color:#606266;font-weight:normal">2</div>
<div class="t" style="left:3121px;top:1515.87px;height:64px;line-height:64px;font-size:32px;color:#548cee;font-weight:normal;">修改</div>
<div class="t" style="left:3224px;top:1515.87px;height:64px;line-height:64px;font-size:32px;color:#548cee;font-weight:normal;">删除</div>
<div class="t" style="left:672px;top:1608.69px;height:64px;line-height:64px;font-size:32px;color:#606266;font-weight:normal;">日志管理</div>
<svg style="left:1300.70px;top:1626.69px" width="27" height="27" viewBox="0 0 32 32" ><path d="M14.5 28.7 H3 V1.8 H26.6 V16.5" fill="none" stroke="#606266" stroke-width="2.4"/><path d="M8 9 H21.5 M8 14 H15" stroke="#606266" stroke-width="2.1"/><circle cx="22.8" cy="23.6" r="6.5" fill="none" stroke="#606266" stroke-width="2.1"/><path d="M19.5 23.6 L21.7 26.2 L26 21.2" fill="none" stroke="#606266" stroke-width="2.1"/></svg>
<div class="a" style="left:1564.3px;top:1615.79px;width:98.2px;height:53.4px;background:#f4f4f5;border:2px solid #e9e9eb;border-radius:9px"></div>
<div class="t" style="left:1313.40px;width:600px;text-align:center;top:1615.19px;height:54px;line-height:54px;font-size:27px;color:#909399;font-weight:normal">菜单</div>
<div class="a" style="left:1836.3px;top:1615.79px;width:152.5px;height:53.4px;background:#eef3fd;border:2px solid #dce8fb;border-radius:9px"></div>
<div class="t" style="left:1612.50px;width:600px;text-align:center;top:1615.19px;height:54px;line-height:54px;font-size:27px;color:#548cee;font-weight:normal">内部打开</div>
<div class="t" style="left:1912.50px;width:600px;text-align:center;top:1608.69px;height:64px;line-height:64px;font-size:32px;color:#606266;font-weight:normal">3</div>
<div class="t" style="left:3121px;top:1608.69px;height:64px;line-height:64px;font-size:32px;color:#548cee;font-weight:normal;">修改</div>
<div class="t" style="left:3224px;top:1608.69px;height:64px;line-height:64px;font-size:32px;color:#548cee;font-weight:normal;">删除</div>
<div class="t" style="left:706px;top:1701.51px;height:64px;line-height:64px;font-size:32px;color:#606266;font-weight:normal;">登录日志</div>
<svg style="left:1301.20px;top:1720.01px" width="26" height="26" viewBox="0 0 32 32" ><path d="M15.5 30.9 H2.5 V1.75 H26.9 V16.6" fill="none" stroke="#606266" stroke-width="2.3"/><path d="M7.6 9.3 H21.8 M7.6 15.3 H21.8 M7.6 21 H14.5" stroke="#606266" stroke-width="2.1"/><circle cx="22.6" cy="22.2" r="3.6" fill="none" stroke="#606266" stroke-width="2.1"/><path d="M16.4 32.2 C16.4 28.5 19 26.6 22.6 26.6 C26.2 26.6 28.8 28.5 28.8 32.2" fill="none" stroke="#606266" stroke-width="2.1"/></svg>
<div class="a" style="left:1564.3px;top:1708.61px;width:98.2px;height:53.4px;background:#f4f4f5;border:2px solid #e9e9eb;border-radius:9px"></div>
<div class="t" style="left:1313.40px;width:600px;text-align:center;top:1708.01px;height:54px;line-height:54px;font-size:27px;color:#909399;font-weight:normal">菜单</div>
<div class="a" style="left:1836.3px;top:1708.61px;width:152.5px;height:53.4px;background:#eef3fd;border:2px solid #dce8fb;border-radius:9px"></div>
<div class="t" style="left:1612.50px;width:600px;text-align:center;top:1708.01px;height:54px;line-height:54px;font-size:27px;color:#548cee;font-weight:normal">内部打开</div>
<div class="t" style="left:1912.50px;width:600px;text-align:center;top:1701.51px;height:64px;line-height:64px;font-size:32px;color:#606266;font-weight:normal">0</div>
<div class="t" style="left:2229.50px;width:600px;text-align:center;top:1701.91px;height:63.2px;line-height:63.2px;font-size:31.6px;color:#606266;font-weight:normal">sys/log/login</div>
<div class="t" style="left:2567.00px;width:600px;text-align:center;top:1701.91px;height:63.2px;line-height:63.2px;font-size:31.6px;color:#606266;font-weight:normal">sys:log:login</div>
<div class="t" style="left:3121px;top:1701.51px;height:64px;line-height:64px;font-size:32px;color:#548cee;font-weight:normal;">修改</div>
<div class="t" style="left:3224px;top:1701.51px;height:64px;line-height:64px;font-size:32px;color:#548cee;font-weight:normal;">删除</div>
<svg style="left:0;top:0" width="3434" height="1832"><path d="M631.8 519.05 L641.5 528.65 L651.2 519.05 M671 609.87 L680.2 618.77 L671 627.67 M671 702.69 L680.2 711.59 L671 720.49 M671 795.51 L680.2 804.41 L671 813.31 M671 888.33 L680.2 897.23 L671 906.13 M631.8 983.15 L641.5 992.75 L651.2 983.15 M671 1073.97 L680.2 1082.87 L671 1091.77 M671 1166.79 L680.2 1175.69 L671 1184.59 M671 1259.61 L680.2 1268.51 L671 1277.41 M671 1352.43 L680.2 1361.33 L671 1370.23 M631.8 1447.25 L641.5 1456.85 L651.2 1447.25 M671 1538.07 L680.2 1546.97 L671 1555.87 M631.8 1632.89 L641.5 1642.49 L651.2 1632.89" fill="none" stroke="#606266" stroke-width="1.6"/></svg>
</body></html>
